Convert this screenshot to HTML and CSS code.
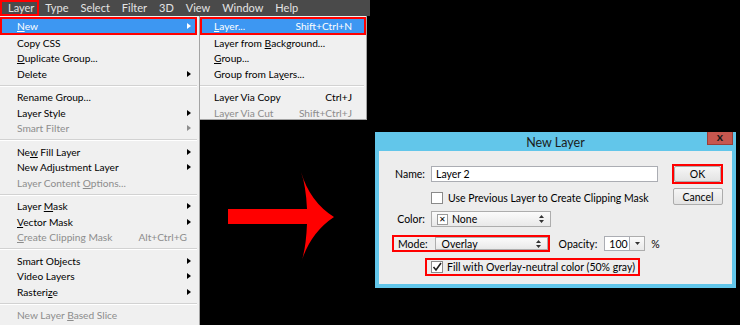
FILE: index.html
```html
<!DOCTYPE html>
<html lang="en">
<head>
    <meta charset="UTF-8">
    <title>Layer menu - New Layer</title>
    <link rel="stylesheet" href="styles.css">
</head>
<body>
    <!-- Top menu bar -->
    <div class="menubar">
        <span class="mb-item active">Layer</span>
        <span class="mb-item">Type</span>
        <span class="mb-item">Select</span>
        <span class="mb-item">Filter</span>
        <span class="mb-item">3D</span>
        <span class="mb-item">View</span>
        <span class="mb-item">Window</span>
        <span class="mb-item">Help</span>
    </div>

    <div class="stage">
        <!-- Layer menu -->
        <div class="menu">
            <div class="mi hl"><span><u>N</u>ew</span><i class="arr"></i></div>
            <div class="mi"><span>Copy CSS</span></div>
            <div class="mi"><span><u>D</u>uplicate Group...</span></div>
            <div class="mi"><span>Delete</span><i class="arr"></i></div>
            <div class="sep"></div>
            <div class="mi"><span>Rename Group...</span></div>
            <div class="mi"><span>Layer Style</span><i class="arr"></i></div>
            <div class="mi off"><span>Smart Filter</span><i class="arr"></i></div>
            <div class="sep"></div>
            <div class="mi"><span>Ne<u>w</u> Fill Layer</span><i class="arr"></i></div>
            <div class="mi"><span>New Adjustment Layer</span><i class="arr"></i></div>
            <div class="mi off"><span>Layer Content <u>O</u>ptions...</span></div>
            <div class="sep"></div>
            <div class="mi"><span>Layer <u>M</u>ask</span><i class="arr"></i></div>
            <div class="mi"><span><u>V</u>ector Mask</span><i class="arr"></i></div>
            <div class="mi off"><span><u>C</u>reate Clipping Mask</span><span class="key">Alt+Ctrl+G</span></div>
            <div class="sep"></div>
            <div class="mi"><span>Smart Objects</span><i class="arr"></i></div>
            <div class="mi"><span>Video Layers</span><i class="arr"></i></div>
            <div class="mi"><span>Rasteri<u>z</u>e</span><i class="arr"></i></div>
            <div class="sep"></div>
            <div class="mi off"><span>New Layer <u>B</u>ased Slice</span></div>
            <div class="sep"></div>
        </div>

        <div class="side">
            <!-- New submenu -->
            <div class="submenu">
                <div class="mi hl"><span><u>L</u>ayer...</span><span class="key">Shift+Ctrl+N</span></div>
                <div class="mi"><span>Layer from <u>B</u>ackground...</span></div>
                <div class="mi"><span><u>G</u>roup...</span></div>
                <div class="mi"><span>Group from La<u>y</u>ers...</span></div>
                <div class="sep"></div>
                <div class="mi"><span>Layer Via Copy</span><span class="key">Ctrl+J</span></div>
                <div class="mi off"><span>Layer Via Cut</span><span class="key">Shift+Ctrl+J</span></div>
            </div>

            <div class="lower">
                <svg class="arrow" width="106" height="91" viewBox="0 0 106 91">
                    <path d="M0,37 L79,37 Q78,14 73,0 Q82,30 106,45 Q82,61 73,91 Q78,77 79,52 L0,52 Z" fill="#ff0000"/>
                </svg>

                <!-- New Layer dialog -->
                <div class="dialog">
                    <div class="dlg-title">
                        <span></span>
                        <span class="dlg-name">New Layer</span>
                        <span class="close">x</span>
                    </div>
                    <div class="dlg-body">
                        <div class="form">
                            <div class="row row-name">
                                <span class="lbl">Name:</span>
                                <div class="field name">Layer 2</div>
                            </div>
                            <div class="row row-clip">
                                <span class="box"></span>
                                <span>Use Previous Layer to Create Clipping Mask</span>
                            </div>
                            <div class="row row-color">
                                <span class="lbl">Color:</span>
                                <div class="select color-sel">
                                    <span class="xbox">✕</span>
                                    <span>None</span>
                                    <svg class="caret" width="5" height="8" viewBox="0 0 5 8"><path d="M0,3 L2.5,0 L5,3 Z M0,5 L2.5,8 L5,5 Z" fill="#333"/></svg>
                                </div>
                            </div>
                            <div class="row row-mode">
                                <div class="mark mode-mark">
                                    <span>Mode:</span>
                                    <div class="select mode-sel">
                                        <span>Overlay</span>
                                        <svg class="caret" width="5" height="8" viewBox="0 0 5 8"><path d="M0,3 L2.5,0 L5,3 Z M0,5 L2.5,8 L5,5 Z" fill="#333"/></svg>
                                    </div>
                                </div>
                                <span class="op-lbl">Opacity:</span>
                                <div class="field op">100</div>
                                <div class="spin"><svg width="5" height="3" viewBox="0 0 5 3"><path d="M0,0 L5,0 L2.5,3 Z" fill="#333"/></svg></div>
                                <span class="pct">%</span>
                            </div>
                            <div class="row row-fill">
                                <div class="mark fill-mark">
                                    <span class="box checked">
                                        <svg width="10" height="10" viewBox="0 0 10 10"><path d="M1.5,5 L4,8 L9,1" fill="none" stroke="#1e1e1e" stroke-width="1.6"/></svg>
                                    </span>
                                    <span>Fill with Overlay-neutral color (50% gray)</span>
                                </div>
                            </div>
                        </div>
                        <div class="btns">
                            <div class="ok-mark"><button class="btn">OK</button></div>
                            <button class="btn cancel">Cancel</button>
                        </div>
                    </div>
                </div>
            </div>
        </div>
    </div>
</body>
</html>
```

FILE: styles.css
```css
body {
    margin: 0;
    width: 740px;
    height: 325px;
    overflow: hidden;
    background: #000;
    font-family: Lato, "Liberation Sans", sans-serif;
}

/* menu bar */
.menubar {
    display: flex;
    width: 370px;
    height: 16px;
    background: #4a4a4a;
    color: #e4e4e4;
    font-size: 11px;
    line-height: 16px;
}
.mb-item {
    padding: 0 6px;
}
.mb-item.active {
    padding: 0 5px 0 8px;
    box-shadow: inset 0 0 0 2px #ff0000;
}

.stage {
    display: flex;
    align-items: flex-start;
}

/* menus */
.menu, .submenu {
    background: #f0f0f0;
    font-size: 10.2px;
    color: #000;
    box-sizing: border-box;
}
.menu {
    width: 200px;
    height: 309px;
    padding-top: 1px;
    border-right: 1px solid #a3a3a3;
}
.submenu {
    width: 167px;
    height: 104px;
    padding-top: 1px;
    border-right: 1px solid #a3a3a3;
    border-bottom: 1px solid #a3a3a3;
}
.mi {
    display: flex;
    align-items: center;
    height: 15.5px;
    padding: 0 3px 0 17px;
    margin-right: 2px;
    white-space: nowrap;
}
.submenu .mi {
    padding: 0 14px 0 14px;
    margin-right: 0;
}
.mi.hl {
    height: 18px;
    background: #3d97f2;
    color: #fff;
    box-shadow: inset 0 0 0 2px #ff0000;
}
.mi.off {
    color: #8d8d8d;
}
.mi .key {
    margin-left: auto;
}
.menu .mi .key {
    margin-right: 7px;
}
.arr {
    margin-left: auto;
    margin-right: 3px;
    width: 0;
    height: 0;
    border-left: 4px solid #000;
    border-top: 3.5px solid transparent;
    border-bottom: 3.5px solid transparent;
}
.mi.hl .arr {
    border-left-color: #fff;
}
.mi.off .arr {
    border-left-color: #8d8d8d;
}
u {
    text-decoration-thickness: 1px;
    text-underline-offset: 1px;
}
.sep {
    height: 8px;
    display: flex;
    flex-direction: column;
    justify-content: center;
    margin-right: 2px;
}
.sep::before {
    content: "";
    border-top: 1px solid #d2d2d2;
    border-bottom: 1px solid #fff;
}

/* arrow + dialog */
.lower {
    display: flex;
    align-items: flex-start;
    margin-top: 12px;
}
.arrow {
    margin: 40px 0 0 28px;
}
.dialog {
    margin-left: 41px;
    width: 361px;
    background: #62c6ea;
    font-size: 10.5px;
    color: #000;
}
.dlg-title {
    display: grid;
    grid-template-columns: 1fr auto 1fr;
    height: 19px;
}
.dlg-name {
    font-size: 12.5px;
    line-height: 21px;
    color: #1b1b1b;
}
.close {
    justify-self: end;
    margin-right: 3px;
    width: 26px;
    height: 13px;
    background: #c7574f;
    border: 1px solid #9c3e38;
    border-top: 0;
    box-sizing: border-box;
    text-align: center;
    font-weight: bold;
    font-size: 12px;
    line-height: 10px;
    color: #1a1a1a;
}
.dlg-body {
    display: flex;
    margin: 0 4px 4px;
    height: 133px;
    background: #ededed;
}
.form {
    flex: 1;
    padding-top: 15px;
}
.row {
    display: flex;
    align-items: center;
    white-space: nowrap;
}
.lbl {
    width: 46px;
    text-align: right;
    margin-right: 6px;
}
.row-name {
    height: 16px;
}
.row-clip {
    height: 12px;
    margin: 10px 0 0 52px;
}
.row-color {
    height: 16px;
    margin-top: 7px;
}
.row-mode {
    height: 17px;
    margin-top: 8px;
}
.row-fill {
    margin-top: 6px;
}
.field {
    box-sizing: border-box;
    height: 16px;
    line-height: 14px;
    padding-left: 4px;
    background: #fff;
    border: 1px solid #abadb3;
}
.name {
    width: 227px;
}
.box {
    box-sizing: border-box;
    width: 12px;
    height: 12px;
    margin-right: 5px;
    background: #fff;
    border: 1px solid #8a8a8a;
    display: flex;
    align-items: center;
    justify-content: center;
}
.select {
    box-sizing: border-box;
    display: flex;
    align-items: center;
    height: 16px;
    padding: 0 6px 0 5px;
    background: linear-gradient(#fbfbfb, #e9e9e9);
    border: 1px solid #adadad;
}
.select .caret {
    margin-left: auto;
}
.color-sel {
    width: 120px;
}
.xbox {
    box-sizing: border-box;
    width: 11px;
    height: 11px;
    margin-right: 4px;
    border: 1px solid #9a9a9a;
    background: #fff;
    font-size: 8px;
    line-height: 9px;
    text-align: center;
}
.mark {
    display: flex;
    align-items: center;
    border: 2px solid #ff0000;
    box-sizing: border-box;
}
.mode-mark {
    height: 17px;
    margin-left: 13px;
    padding-left: 4px;
}
.mode-mark .select {
    width: 113px;
    height: 13px;
    margin-left: 7px;
    padding-left: 6px;
}
.op-lbl {
    margin-left: 9px;
    margin-right: 7px;
}
.op {
    width: 26px;
    height: 15px;
}
.spin {
    box-sizing: border-box;
    width: 15px;
    height: 15px;
    display: flex;
    align-items: center;
    justify-content: center;
    background: linear-gradient(#fbfbfb, #e9e9e9);
    border: 1px solid #adadad;
    border-left: 0;
}
.pct {
    margin-left: 6px;
}
.fill-mark {
    height: 18px;
    margin-left: 46px;
    padding: 0 3px 0 4px;
}
.fill-mark .box {
    margin-right: 4px;
}

/* buttons */
.btns {
    width: 51px;
    margin-right: 9px;
    padding-top: 13px;
    display: flex;
    flex-direction: column;
    align-items: flex-end;
}
.ok-mark {
    box-sizing: border-box;
    width: 51px;
    height: 20px;
    border: 2px solid #ff0000;
}
.btn {
    box-sizing: border-box;
    width: 100%;
    height: 100%;
    padding: 0;
    font-family: inherit;
    font-size: 10.5px;
    color: #000;
    background: linear-gradient(#f6f6f6, #e3e3e3);
    border: 1px solid #acacac;
    border-radius: 2px;
}
.btn.cancel {
    width: 50px;
    height: 17px;
    margin-top: 4px;
}
```
